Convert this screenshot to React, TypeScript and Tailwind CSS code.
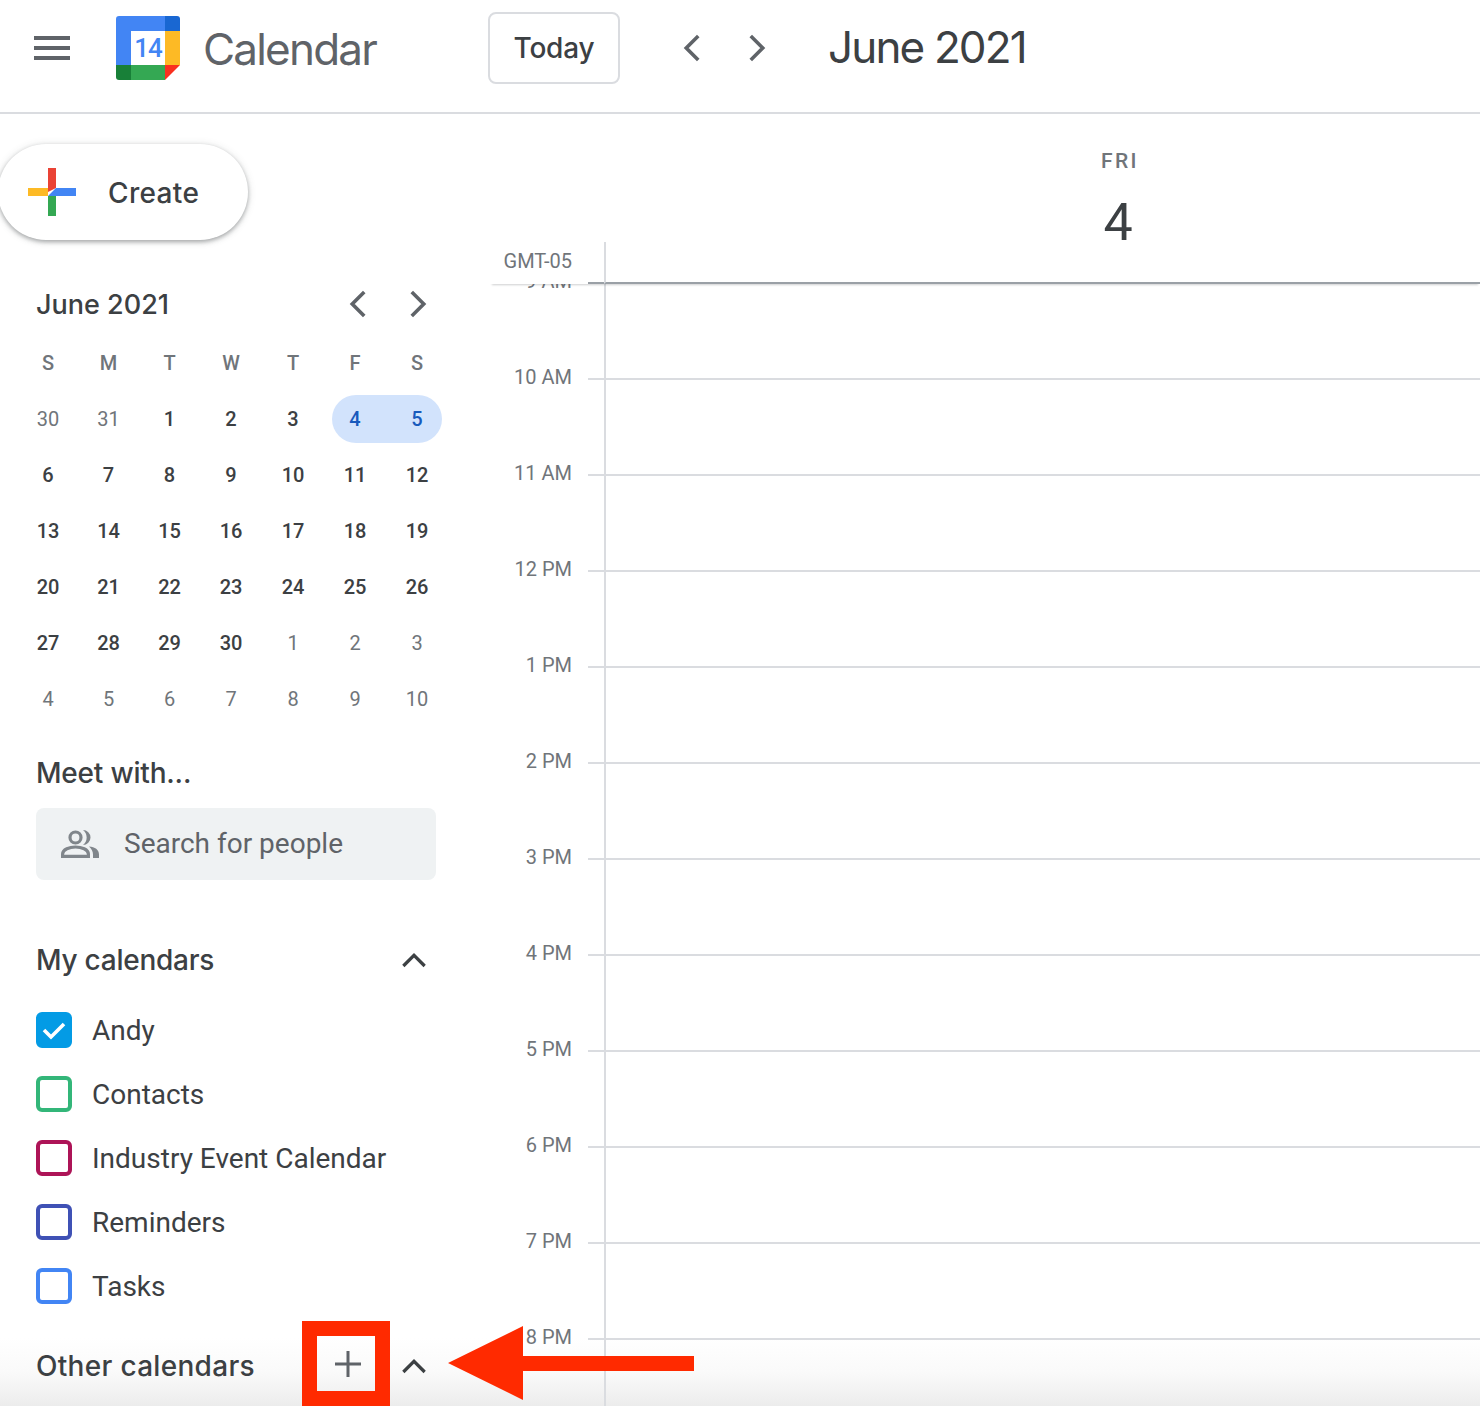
const ROBOTO = "font-['Roboto',sans-serif]";

const miniWeeks = [
  ["30", "31", "1", "2", "3", "4", "5"],
  ["6", "7", "8", "9", "10", "11", "12"],
  ["13", "14", "15", "16", "17", "18", "19"],
  ["20", "21", "22", "23", "24", "25", "26"],
  ["27", "28", "29", "30", "1", "2", "3"],
  ["4", "5", "6", "7", "8", "9", "10"],
];
const hours = ["9 AM", "10 AM", "11 AM", "12 PM", "1 PM", "2 PM", "3 PM", "4 PM", "5 PM", "6 PM", "7 PM", "8 PM"];
const calendars = [
  { name: "Andy", border: "border-[#039be5]", bg: "bg-[#039be5]", checked: true },
  { name: "Contacts", border: "border-[#33b679]", bg: "", checked: false },
  { name: "Industry Event Calendar", border: "border-[#ad1457]", bg: "", checked: false },
  { name: "Reminders", border: "border-[#3f51b5]", bg: "", checked: false },
  { name: "Tasks", border: "border-[#4285f4]", bg: "", checked: false },
];

function Chevron({ dir, className }: { dir: "left" | "right" | "up"; className: string }) {
  const d = { left: "M15.5 4l-8 8 8 8", right: "M8.5 4l8 8-8 8", up: "M4 16.5l8-8 8 8" }[dir];
  return (
    <svg className={className} viewBox="0 0 24 24" fill="none" stroke="currentColor" strokeWidth="2.4">
      <path d={d} />
    </svg>
  );
}

function CalendarLogo() {
  return (
    <div className="relative h-16 w-16 shrink-0">
      <svg className="h-16 w-16" viewBox="0 0 64 64">
        <path d="M49 0H3a3 3 0 0 0-3 3v46h15V15h34z" fill="#4285f4" />
        <path d="M49 0h12a3 3 0 0 1 3 3v12H49z" fill="#1967d2" />
        <path d="M49 15h15v34H49z" fill="#fdba25" />
        <path d="M15 49h34v15H15z" fill="#34a853" />
        <path d="M0 49h15v15H3a3 3 0 0 1-3-3z" fill="#188038" />
        <path d="M49 49h15L49 64z" fill="#f9301f" />
      </svg>
      <span className={`absolute left-[15px] top-[15px] flex h-[34px] w-[34px] items-center justify-center ${ROBOTO} text-[26px] font-medium tracking-[-1px] text-[#4285f4]`}>
        14
      </span>
    </div>
  );
}

function CreatePlus() {
  return (
    <svg className="h-12 w-12 shrink-0" viewBox="0 0 48 48">
      <path d="M20 0h8v20l-8 4z" fill="#ea4335" />
      <path d="M0 20h20v8H0z" fill="#fdba25" />
      <path d="M28 20h20v8H20z" fill="#4285f4" />
      <path d="M20 28h8v20h-8z" fill="#34a853" />
    </svg>
  );
}

function PeopleIcon() {
  return (
    <svg className="h-[28px] w-[38px] shrink-0" viewBox="0 0 38 28" fill="none" stroke="#80868b" strokeWidth="3.2">
      <circle cx="14.5" cy="7.5" r="5.5" />
      <path d="M1.6 26.400V24c0-4.500 7-7 12.900-7s12.900 2.500 12.900 7v2.400z" />
      <path d="M22 0a7.500 7.500 0 0 1 0 15a9.500 9.500 0 0 0 0-15z" fill="#80868b" stroke="none" />
      <path d="M28 16.500c6 .5 10 3 10 8V28h-6v-3.500c0-3-1.500-6-4-8z" fill="#80868b" stroke="none" />
    </svg>
  );
}

function MiniCalendar() {
  return (
    <div className={`${ROBOTO} mt-[37px] pl-[18px]`}>
      <div className="flex h-14 w-[430px] items-center pl-[18px] pr-[13px]">
        <span className="flex-1 font-['Inter',sans-serif] text-[27px] font-medium text-[#3c4043]">June 2021</span>
        <Chevron dir="left" className="mb-[2px] h-9 w-9 text-[#5f6368]" />
        <Chevron dir="right" className="mb-[2px] ml-[22px] h-9 w-9 text-[#5f6368]" />
      </div>
      <div className="mt-[2px] grid w-[430px] grid-cols-[60px_61px_61px_62px_62px_62px_62px] text-center">
        {["S", "M", "T", "W", "T", "F", "S"].map((d, i) => (
          <div key={i} className="flex h-[56px] items-center justify-center text-[20px] font-medium text-[#70757a]">
            {d}
          </div>
        ))}
        {miniWeeks.flat().map((d, i) => {
          const muted = i < 2 || i >= 32;
          const sel = i === 5 || i === 6;
          return (
            <div
              key={i}
              className={`flex h-[56px] items-center justify-center text-[20px] ${
                muted ? "text-[#70757a]" : sel ? "font-medium text-[#185abc]" : "font-medium text-[#3c4043]"
              }`}
            >
              <span
                className={`flex h-12 flex-1 items-center justify-center ${
                  i === 5 ? "ml-2 rounded-l-full bg-[#d2e3fc] pr-2" : i === 6 ? "mr-[6px] rounded-r-full bg-[#d2e3fc] pl-[6px]" : ""
                }`}
              >
                {d}
              </span>
            </div>
          );
        })}
      </div>
    </div>
  );
}

function CalendarRow({ item }: { item: (typeof calendars)[number] }) {
  return (
    <div className="flex h-16 items-center gap-5">
      <span className={`mb-[2px] flex h-9 w-9 shrink-0 items-center justify-center rounded-[6px] border-4 ${item.border} ${item.bg}`}>
        {item.checked && (
          <svg className="h-7 w-7 shrink-0" viewBox="0 0 28 28" fill="none" stroke="#fff" strokeWidth="3.6">
            <path d="M4 14l7 7L24 8" />
          </svg>
        )}
      </span>
      <span className={`${ROBOTO} text-[28px] text-[#3c4043]`}>{item.name}</span>
    </div>
  );
}

function Sidebar() {
  return (
    <aside className="w-[490px] shrink-0 pt-[30px]">
      <div className="-ml-[2px] flex h-24 w-[250px] items-center rounded-r-[48px] rounded-l-[48px] bg-white pl-[30px] shadow-[0_2px_4px_rgba(60,64,67,0.4),0_1px_8px_rgba(60,64,67,0.15)]">
        <CreatePlus />
        <span className="ml-8 mt-[2px] font-['Inter',sans-serif] text-[28px] font-medium tracking-[0.35px] text-[#3c4043]">Create</span>
      </div>
      <MiniCalendar />
      <div className="ml-9 mt-[28px] w-[400px]">
        <div className="font-['Inter',sans-serif] text-[28px] font-medium leading-9 tracking-[-0.2px] text-[#3c4043]">Meet with...</div>
        <div className="mt-[17px] flex h-[72px] items-center gap-[25px] rounded-lg bg-[#eff2f3] pl-[25px]">
          <PeopleIcon />
          <span className={`${ROBOTO} text-[28px] text-[#5f6368]`}>Search for people</span>
        </div>
        <div className="mt-[62px] flex h-9 items-center justify-between pr-[6px]">
          <span className="font-['Inter',sans-serif] text-[28px] font-medium tracking-[-0.25px] text-[#3c4043]">My calendars</span>
          <Chevron dir="up" className="h-8 w-8 text-[#3c4043]" />
        </div>
        <div className="mt-[21px]">
          {calendars.map((c) => (
            <CalendarRow key={c.name} item={c} />
          ))}
        </div>
        <div className="mt-[29px] flex h-9 items-center justify-between pr-[6px]">
          <span className="font-['Inter',sans-serif] text-[28px] font-medium tracking-[0.3px] text-[#3c4043]">Other calendars</span>
          <span className="flex items-center gap-[34px]">
            <svg className="mb-1 h-8 w-8 text-[#5f6368]" viewBox="0 0 32 32" fill="none" stroke="currentColor" strokeWidth="3">
              <path d="M16 3v26M3 16h26" />
            </svg>
            <Chevron dir="up" className="h-8 w-8 text-[#3c4043]" />
          </span>
        </div>
      </div>
    </aside>
  );
}

function DayView() {
  return (
    <main className={`${ROBOTO} flex min-w-0 flex-1 flex-col`}>
      <div className="relative z-10 shadow-[0_3px_2px_-2px_rgba(60,64,67,0.25)]">
        <div className="ml-[602px] flex h-[128px] w-14 flex-col items-center pt-[33px]">
          <span className="text-[21px] font-medium leading-7 tracking-[2.4px] text-[#70757a]">FRI</span>
          <span className="-ml-[4px] mt-[18px] text-[52px] leading-[60px] text-[#3c4043]">4</span>
        </div>
        <div className="flex h-[42px]">
          <div className="w-[82px] pt-[5px] text-right text-[20px] leading-7 text-[#70757a]">GMT-05</div>
          <div className="ml-4 w-4 border-b-2 border-[#9aa0a6]" />
          <div className="flex-1 border-b-2 border-l-2 border-b-[#9aa0a6] border-l-[#dadce0]" />
        </div>
      </div>
      <div className="min-h-0 flex-1 overflow-hidden">
        {hours.map((h, i) => (
          <div key={h} className={`flex ${i === 0 ? "h-[94px]" : "h-24"}`}>
            <div className={`w-[82px] text-right text-[20px] leading-7 text-[#70757a] ${i === 0 ? "-mt-[17px]" : "-mt-[15px]"}`}>{h}</div>
            <div className={`ml-4 w-4 border-[#dadce0] ${i === 0 ? "" : "border-t-2"}`} />
            <div className={`flex-1 border-l-2 border-[#dadce0] ${i === 0 ? "" : "border-t-2"}`} />
          </div>
        ))}
      </div>
    </main>
  );
}

export default function App() {
  return (
    <div className="relative flex h-[1406px] w-[1480px] flex-col overflow-hidden bg-white">
      {/* bottom fade behind the page */}
      <div className="pointer-events-none absolute inset-x-0 bottom-0 h-[68px] bg-gradient-to-b from-white via-[#fafafa] to-[#ececec]" />

      <header className="relative flex h-[114px] shrink-0 items-center border-b-2 border-[#dadce0] pb-[16px]">
        <svg className="ml-[34px] h-[24px] w-[36px]" viewBox="0 0 36 24" fill="#5f6368">
          <path d="M0 0h36v4H0zM0 10h36v4H0zM0 20h36v4H0z" />
        </svg>
        <div className="ml-[46px]">
          <CalendarLogo />
        </div>
        <span className="ml-[23px] mt-[2px] font-['Inter',sans-serif] text-[44px] tracking-[-1.8px] text-[#5f6368]">Calendar</span>
        <button className="ml-[112px] h-[72px] w-[132px] rounded-lg border-2 border-[#dadce0] font-['Inter',sans-serif] text-[28px] font-medium tracking-[-0.2px] text-[#3c4043]">
          Today
        </button>
        <Chevron dir="left" className="ml-[55px] h-9 w-9 text-[#5f6368]" />
        <Chevron dir="right" className="ml-[27px] h-9 w-9 text-[#5f6368]" />
        <span className="mb-[2px] ml-[54px] font-['Inter',sans-serif] text-[44px] tracking-[-1.85px] text-[#3c4043]">June 2021</span>
      </header>
      <div className="relative flex min-h-0 flex-1">
        <Sidebar />
        <DayView />
      </div>

      {/* annotation: red box and arrow */}
      <div className="absolute left-[302px] top-[1321px] h-[85px] w-[88px] border-[15px] border-[#ff2a00]" />
      <svg className="absolute left-[448px] top-[1326px] h-[74px] w-[246px]" viewBox="0 0 246 74" fill="#ff2a00">
        <path d="M0 37L75 0v30h171v15H75v29z" />
      </svg>
    </div>
  );
}
